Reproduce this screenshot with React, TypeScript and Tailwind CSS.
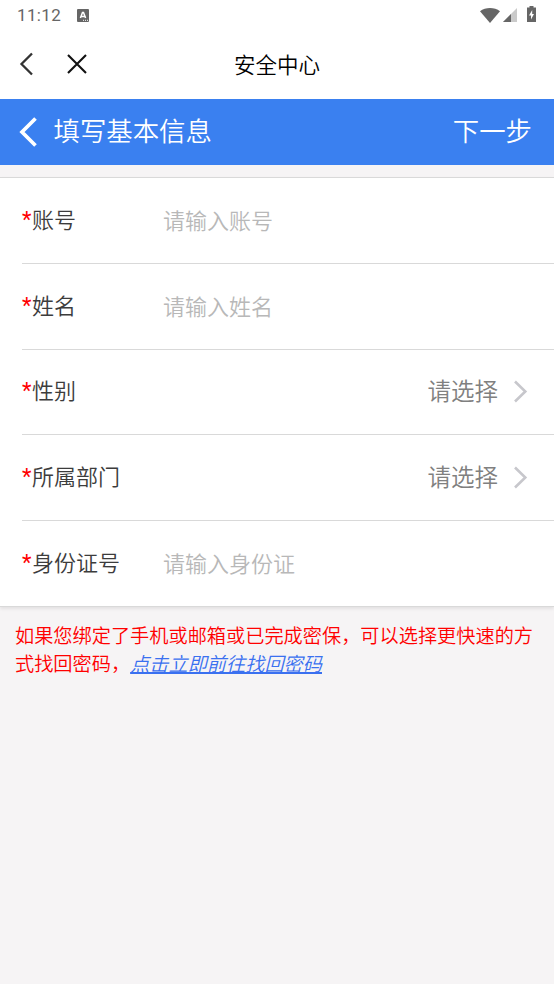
import type { ReactNode } from "react";

function Row({ label, last, children }: { label: string; last?: boolean; children: ReactNode }) {
  return (
    <div
      className={`ml-[22px] flex items-center pb-1 ${
        last ? "h-[85.200px]" : "h-[85.800px] border-b border-[#d9d9d9]"
      }`}
    >
      <label className="flex w-[141px] shrink-0 items-center text-[22px] text-[#3c3c3c]">
        <span className="w-[10px] pt-0.5 font-[Roboto] text-[22px] font-normal text-[#f00]">*</span>
        {label}
      </label>
      {children}
    </div>
  );
}

function TextRow({ label, placeholder, last }: { label: string; placeholder: string; last?: boolean }) {
  return (
    <Row label={label} last={last}>
      <input
        className="mt-0.5 min-w-0 flex-1 bg-transparent text-[22px] outline-none placeholder:text-[#b8b8b8]"
        placeholder={placeholder}
      />
    </Row>
  );
}

function SelectRow({ label }: { label: string }) {
  return (
    <Row label={label}>
      <span className="mt-px ml-auto text-[23.500px] text-[#808080]">请选择</span>
      <svg className="mt-1 mr-[26px] ml-[15px] h-[23px] w-[15px]" viewBox="0 0 15 23" fill="none">
        <path d="M2 1.500 12.300 11.500 2 21.500" stroke="#c7c7cc" strokeWidth="2.600" />
      </svg>
    </Row>
  );
}

function StatusBar() {
  return (
    <div className="flex h-[30px] items-center pr-[18px] pl-[17px] text-[#666]">
      <span className="font-[Roboto] text-[17px] leading-[30px] font-normal tracking-[0.350px]">11:12</span>
      <svg className="ml-4 h-[13px] w-3" viewBox="0 0 12 13">
        <rect width="12" height="13" rx="1" fill="currentColor" />
        <path d="M3.400 9 5.500 3.400H6.500L8.600 9M4.300 7.400h3.400" stroke="#fff" strokeWidth="1.500" fill="none" />
        <path d="M6 11.300h5" stroke="#fff" strokeWidth="1" strokeDasharray="1 1" />
      </svg>
      <svg className="ml-auto h-[15px] w-[20px]" viewBox="0 0 20 15">
        <path d="M0 3.200C5.500-1 14.500-1 20 3.200L10 15Z" fill="currentColor" />
      </svg>
      <svg className="ml-[3px] h-[14px] w-[14px]" viewBox="0 0 14 14">
        <path d="M14 0v14H0Z" fill="#cacaca" />
        <path d="M8 6v8H0Z" fill="currentColor" />
      </svg>
      <svg className="mb-[2px] ml-[10px] h-[16px] w-[9px]" viewBox="0 0 9 16">
        <path d="M2.500 0h4v1.500H9V16H0V1.500h2.500Z" fill="currentColor" />
        <path d="M5.200 4 2 9.500h2V13.500L7 8H5.200Z" fill="#fff" />
      </svg>
    </div>
  );
}

export default function App() {
  return (
    <div className="min-h-[984px] w-full bg-[#f6f4f5] font-['Noto_Sans_CJK_SC',sans-serif] font-[350]">
      <div className="bg-white">
        <StatusBar />
        <div className="relative flex h-[69px] items-center justify-center pb-px">
          <div className="absolute left-[19px] flex gap-[32px] text-[#111]">
            <svg className="h-6 w-[15px] text-[#333]" viewBox="0 0 15 24" fill="none">
              <path d="M13 1.500 2.500 12 13 22.500" stroke="currentColor" strokeWidth="2.300" />
            </svg>
            <svg className="mt-0.5 h-5 w-[22px]" viewBox="0 0 22 20" fill="none">
              <path d="m2 1 18 18M20 1 2 19" stroke="currentColor" strokeWidth="2.100" />
            </svg>
          </div>
          <h1 className="text-[21.500px] text-black">安全中心</h1>
        </div>
      </div>

      <div className="flex h-[66px] items-center bg-[#3a80f0] pr-[22px] pl-[19px] text-[26.400px] text-white">
        <svg className="h-[30px] w-[18px]" viewBox="0 0 18 30" fill="none">
          <path d="M16.500 1.500 3 15l13.500 13.500" stroke="currentColor" strokeWidth="3.700" />
        </svg>
        <span className="ml-[16.500px] pb-[5px]">填写基本信息</span>
        <span className="ml-auto pb-[5px]">下一步</span>
      </div>

      <div className="mt-3 border-y border-[#d9d9d9] bg-white shadow-[0_2px_3px_rgba(0,0,0,0.080)]">
        <TextRow label="账号" placeholder="请输入账号" />
        <TextRow label="姓名" placeholder="请输入姓名" />
        <SelectRow label="性别" />
        <SelectRow label="所属部门" />
        <TextRow label="身份证号" placeholder="请输入身份证" last />
      </div>

      <p className="mt-[14px] px-[15px] text-[19.200px] leading-[28px] text-[#f00]">
        如果您绑定了手机或邮箱或已完成密保，可以选择更快速的方式找回密码，
        <a className="text-[#3a70f0] italic underline decoration-2 underline-offset-1">点击立即前往找回密码</a>
      </p>
    </div>
  );
}
